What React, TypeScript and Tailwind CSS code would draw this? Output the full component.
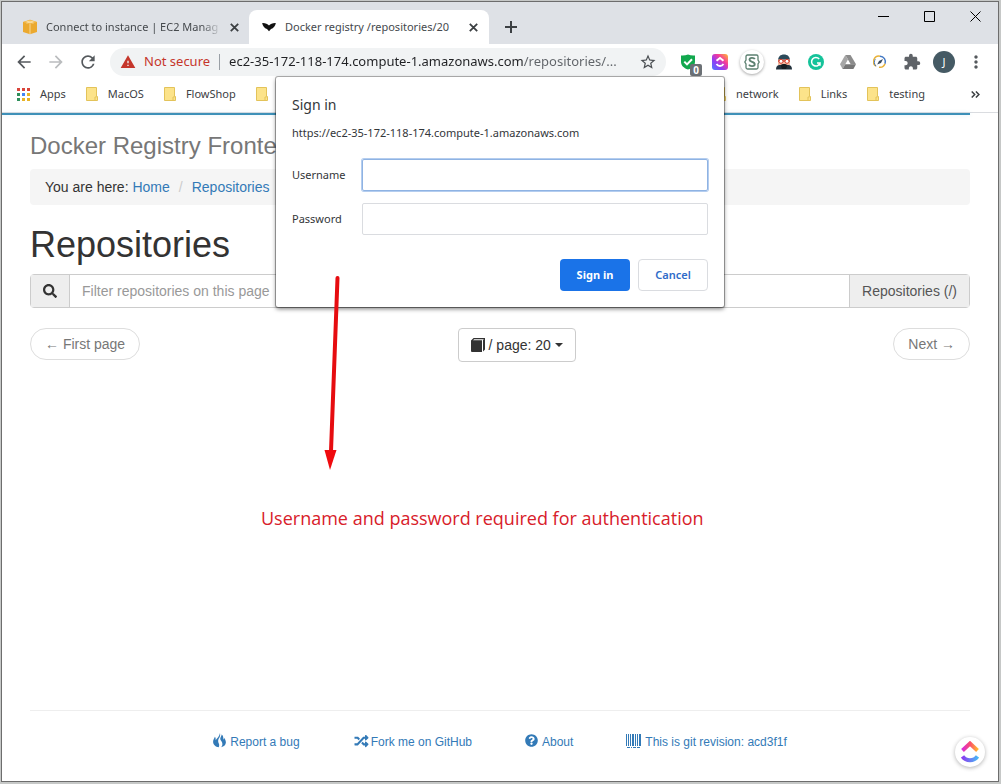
import type { ReactNode } from "react";
import {
  MdArrowBack,
  MdArrowForward,
  MdExtension,
  MdMoreVert,
  MdRefresh,
  MdStarBorder,
  MdWarning,
} from "react-icons/md";
import { FaQuestionCircle, FaRandom, FaSearch } from "react-icons/fa";

const appColors = [
  "bg-[#d9453b]",
  "bg-[#d9453b]",
  "bg-[#d9453b]",
  "bg-[#2f8f5b]",
  "bg-[#4285f4]",
  "bg-[#e8b325]",
  "bg-[#2f8f5b]",
  "bg-[#e8b325]",
  "bg-[#e8b325]",
];

const CloseIcon = () => (
  <svg className="size-[9px]" viewBox="0 0 9 9" fill="none" stroke="#3c4043" strokeWidth="1.8">
    <path d="M.8.8l7.4 7.4M8.2.8L.8 8.2" />
  </svg>
);

const BoxIcon = () => (
  <svg className="size-4 shrink-0" viewBox="0 0 16 16">
    <path d="M8 .8L15 3v10L8 15.200 1 13V3z" fill="#eba92f" />
    <path d="M1 3L8 .8 15 3 8 4.800z" fill="#f4c15c" />
    <path d="M8 4.800v10.400M4.500 2l7 2.200M11.500 2l-7 2.200" stroke="#fbe3b0" strokeWidth=".8" />
  </svg>
);

const TailIcon = () => (
  <svg className="h-[10px] w-[14px] shrink-0" viewBox="0 0 14 10">
    <path
      d="M.2 1C3 .8 5.600 1.700 7 3.500 8.400 1.700 11 .8 13.800 1c-.3 3-2.300 5.200-4.800 6L7 9.200 5 7C2.500 6.200.5 4 .2 1z"
      fill="#111"
    />
  </svg>
);

const FolderIcon = () => (
  <svg className="h-[14px] w-3 shrink-0" viewBox="0 0 12 14">
    <path d="M.5.5h10v9h1v4H.5z" fill="#fce38a" stroke="#e3c35a" />
    <path d="M9 13.500v-3.500h1.500" fill="none" stroke="#e3c35a" />
  </svg>
);

const ShieldIcon = () => (
  <svg className="size-4" viewBox="0 0 16 16">
    <path d="M8 .5c2 .9 4.300 1.200 7 1v6c0 4-2.500 6.500-7 8-4.500-1.500-7-4-7-8v-6c2.700.2 5-.1 7-1z" fill="#12a84e" />
    <path d="M4.300 7.600l2.700 2.800 5-5.200" fill="none" stroke="#fff" strokeWidth="2" />
  </svg>
);

const ClickUpTile = () => (
  <svg className="size-4" viewBox="0 0 16 16">
    <defs>
      <linearGradient id="tile" x1="0" y1="1" x2="1" y2="0">
        <stop offset="0" stopColor="#4a7bff" />
        <stop offset=".35" stopColor="#8f3df5" />
        <stop offset=".65" stopColor="#f5399b" />
        <stop offset="1" stopColor="#ffc02e" />
      </linearGradient>
    </defs>
    <rect width="16" height="16" rx="3" fill="url(#tile)" />
    <path d="M4.500 6.800L8 3.900l3.500 2.900M4.500 10c1.800 2.600 5.200 2.600 7 0" fill="none" stroke="#fff" strokeWidth="1.900" />
  </svg>
);

const ScriptIcon = () => (
  <span className="flex size-6 items-center justify-center rounded-full bg-white shadow-[0_1px_3px_rgba(0,0,0,0.35)]">
    <svg className="size-4" viewBox="0 0 16 16" fill="none" stroke="#5c8070">
      <path d="M5 1H3.500Q2 1 2 2.500V6L.8 8 2 10v3.500Q2 15 3.500 15H5M5 1h6M11 1h1.500Q14 1 14 2.500V6l1.200 2-1.200 2v3.500q0 1.500-1.500 1.500H5" strokeWidth="1.300" />
      <path d="M10.800 5.200C10 3.500 5.500 3.300 5.500 5.800c0 2.600 5.200 1.700 5.200 4.400 0 2.500-4.800 2.400-5.700.4" strokeWidth="1.900" />
    </svg>
  </span>
);

const NinjaIcon = () => (
  <svg className="size-4" viewBox="0 0 16 16">
    <path d="M2 7c0-4.500 2.500-6.500 6-6.500S14 2.500 14 7v3H2z" fill="#2c4a5a" />
    <path d="M2 5.500h12v5.500H2z" fill="#f2b9a2" />
    <path d="M0 15.500c0-2.500 1-4 3-4.500h10c2 .5 3 2 3 4.500z" fill="#22313c" />
    <path d="M2 7h12" stroke="#c93a2d" strokeWidth="1.200" />
    <circle cx="5" cy="7.300" r="2" fill="#fff" stroke="#d8402f" />
    <circle cx="11" cy="7.300" r="2" fill="#fff" stroke="#d8402f" />
    <path d="M4.500 11c1.500-1.500 5.500-1.500 7 0l-1.500 4H6z" fill="#151b20" />
  </svg>
);

const GrammarIcon = () => (
  <svg className="size-4" viewBox="0 0 16 16">
    <circle cx="8" cy="8" r="8" fill="#15c39a" />
    <path d="M11.200 5A4.300 4.300 0 1 0 12 9H9M12 9v2.800" fill="none" stroke="#fff" strokeWidth="1.500" />
  </svg>
);

const DriveIcon = () => (
  <svg className="h-[14px] w-4" viewBox="0 0 16 14">
    <path d="M5.300 0h5.200L16 9.300H10.700z" fill="#8c8c8c" />
    <path d="M5.300 0l2.700 4.600L2.600 14 0 9.300z" fill="#a6a6a6" />
    <path d="M5.300 9.300H16L13.400 14H2.600z" fill="#767676" />
  </svg>
);

const CompassIcon = () => (
  <svg className="size-[14px]" viewBox="0 0 14 14" fill="none">
    <path d="M3 11.200A5.500 5.500 0 0 1 7 1.200" stroke="#e8b23a" strokeWidth="1.500" />
    <path d="M7 1.200a5.500 5.500 0 0 1 5 7.500" stroke="#4479c4" strokeWidth="1.500" />
    <path d="M12 8.700A5.500 5.500 0 0 1 6 12.200" stroke="#e8b23a" strokeWidth="1.500" />
    <path d="M3 11.200C.8 9 1 6 2.300 4.200" stroke="#4479c4" strokeWidth="1" />
    <path d="M10 4L8 8 4.200 9.500 6 6z" fill="#3b4a5c" />
  </svg>
);

const FireIcon = () => (
  <svg className="h-[15px] w-[13px]" viewBox="0 0 13 15" fill="currentColor">
    <path d="M7 0c.6 2.600-.3 4-1.200 5.600-.9 1.700-.8 3.400 0 4.800.5 1 .6 2.300-.1 3.800C2.700 13.800.2 12 .1 9 0 7 1.300 5.600 1.900 3.800c.8 1 .9 2.100.7 3.400C4 5.400 6.500 3.300 7 0z" />
    <path d="M8.600 1.500c2 1.200 1.600 3.500 1.900 5.200.4-.6.6-1.200.6-2 1.300 1.800 2 3.500 1.700 5.400-.3 2.200-2 3.700-4.600 4.100 1.300-1.500 1.500-3.300.8-5-.7-1.500-1.900-2.300-1.700-3.900.2-1.300 1.200-2 1.300-3.800z" />
  </svg>
);

const BarcodeIcon = () => (
  <svg className="h-[14px] w-[15px]" viewBox="0 0 15 14" fill="currentColor">
    <path d="M0 0h1v12H0zM2 0h1v12H2zM4 0h1v12H4zM6 0h2v12H6zM9 0h1v12H9zM11 0h1v12h-1zM13 0h2v12h-2z" />
    <path d="M1 13h3v1H1zM5 13h1v1H5zM7 13h3v1H7zM11 13h3v1h-3z" />
  </svg>
);

const BookIcon = () => (
  <svg className="size-[14px]" viewBox="0 0 14 14">
    <path d="M2.600 0H14v11.500l-2 2V2.200L12.800 1.200H3.200L2 2.200h9v11.800H1q-1 0-1-1V2.500z" fill="#333" />
  </svg>
);

const ClickUpLogo = () => (
  <svg className="h-[22px] w-[18px]" viewBox="0 0 18 22" fill="none">
    <defs>
      <linearGradient id="roof" x1="0" x2="1">
        <stop offset="0" stopColor="#d92bd9" />
        <stop offset=".5" stopColor="#fb4d6d" />
        <stop offset="1" stopColor="#ffb62e" />
      </linearGradient>
      <linearGradient id="bowl" x1="0" x2="1">
        <stop offset="0" stopColor="#8a3df0" />
        <stop offset="1" stopColor="#49b6f5" />
      </linearGradient>
    </defs>
    <path d="M1.500 9.500L9 2.500l7.500 7" stroke="url(#roof)" strokeWidth="4" />
    <path d="M1.500 15.500c3.500 5 11.500 5 15 0" stroke="url(#bowl)" strokeWidth="4" />
  </svg>
);

const extensions = [
  { name: "Safe browsing", icon: <ShieldIcon />, badge: "0" },
  { name: "ClickUp", icon: <ClickUpTile /> },
  { name: "Scripts", icon: <ScriptIcon /> },
  { name: "Ninja", icon: <NinjaIcon /> },
  { name: "Grammar", icon: <GrammarIcon /> },
  { name: "Drive", icon: <DriveIcon /> },
  { name: "Compass", icon: <CompassIcon /> },
  { name: "Extensions", icon: <MdExtension className="size-[18px] text-[#5f6368]" /> },
];

const footerLinks = [
  { label: "Report a bug", icon: <FireIcon />, gap: "gap-1" },
  { label: "Fork me on GitHub", icon: <FaRandom className="h-[14px] w-[17px]" />, gap: "gap-px" },
  { label: "About", icon: <FaQuestionCircle className="size-[13px]" />, gap: "gap-1" },
  { label: "This is git revision: acd3f1f", icon: <BarcodeIcon />, gap: "gap-1" },
];

const ToolButton = ({ label, children }: { label: string; children: ReactNode }) => (
  <button aria-label={label} className="relative flex h-8 w-8 shrink-0 items-center justify-center">
    {children}
  </button>
);

const Bookmark = ({ label }: { label: string }) => (
  <a href="#" className="flex items-center gap-[10px]">
    <FolderIcon />
    {label}
  </a>
);

const TitleBar = () => (
  <div className="flex h-[42px] justify-between bg-[#dee1e6]">
    <div className="flex items-end text-[11px] text-[#45494d]">
      <div className="flex h-[34px] w-[247px] items-center gap-2 pr-[10px] pl-5">
        <BoxIcon />
        <span className="flex-1 whitespace-nowrap [mask-image:linear-gradient(to_right,#000_88%,transparent)]">
          Connect to instance | EC2 Manag
        </span>
        <button aria-label="Close tab">
          <CloseIcon />
        </button>
      </div>
      <div className="flex h-[34px] w-[240px] items-center gap-[9px] rounded-t-lg bg-white pr-[11px] pl-[13px]">
        <TailIcon />
        <span className="flex-1 whitespace-nowrap">Docker registry /repositories/20</span>
        <button aria-label="Close tab">
          <CloseIcon />
        </button>
      </div>
      <button aria-label="New tab" className="ml-4 flex h-[34px] items-center">
        <svg className="size-3" viewBox="0 0 12 12" stroke="#3c4043" strokeWidth="2">
          <path d="M6 0v12M0 6h12" />
        </svg>
      </button>
    </div>
    <div className="flex h-7 items-center">
      <button aria-label="Minimize" className="flex w-[46px] justify-center">
        <svg className="size-[11px]" viewBox="0 0 11 11" stroke="#000">
          <path d="M0 5.500h11" />
        </svg>
      </button>
      <button aria-label="Maximize" className="flex w-[46px] justify-center">
        <svg className="size-[11px]" viewBox="0 0 11 11" stroke="#000" fill="none">
          <path d="M.5.5h10v10H.5z" />
        </svg>
      </button>
      <button aria-label="Close" className="flex w-[46px] justify-center">
        <svg className="size-[11px]" viewBox="0 0 11 11" stroke="#000">
          <path d="M.5.5l10 10M10.500.5l-10 10" />
        </svg>
      </button>
    </div>
  </div>
);

const Toolbar = () => (
  <div className="flex h-9 items-center gap-[6px] px-[6px]">
    <div className="flex">
      <ToolButton label="Back">
        <MdArrowBack className="size-5 text-[#55595d]" />
      </ToolButton>
      <ToolButton label="Forward">
        <MdArrowForward className="size-5 text-[#babcbe]" />
      </ToolButton>
      <ToolButton label="Reload">
        <MdRefresh className="size-5 text-[#55595d]" />
      </ToolButton>
    </div>
    <div className="flex h-7 flex-1 items-center rounded-full bg-[#f1f3f4] pr-[9px] pl-[10px] text-[13px]">
      <MdWarning className="size-4 shrink-0 text-[#c5362b]" />
      <span className="ml-2 shrink-0 text-[#c5362b]">Not secure</span>
      <span className="ml-[9px] mr-[9px] h-4 w-px shrink-0 bg-[#9aa0a6]" />
      <input
        aria-label="Address"
        readOnly
        value="ec2-35-172-118-174.compute-1.amazonaws.com/repositories/..."
        className="min-w-0 flex-1 bg-[linear-gradient(to_right,#202124_295px,#5f6368_295px)] bg-clip-text text-transparent outline-none"
      />
      <button aria-label="Bookmark this page" className="ml-2 shrink-0">
        <MdStarBorder className="size-[18px] text-[#4a4e52]" />
      </button>
    </div>
    <div className="flex">
      {extensions.map((ext) => (
        <ToolButton key={ext.name} label={ext.name}>
          {ext.icon}
          {ext.badge && (
            <span className="absolute right-[2px] bottom-[2px] flex h-3 w-3 items-center justify-center rounded-xs bg-[#6b7075] text-[10px] font-bold text-white">
              {ext.badge}
            </span>
          )}
        </ToolButton>
      ))}
      <ToolButton label="Profile">
        <span className="flex size-[22px] items-center justify-center rounded-full bg-[#455a64] text-[11px] text-white">
          J
        </span>
      </ToolButton>
      <ToolButton label="Menu">
        <MdMoreVert className="size-5 text-[#55595d]" />
      </ToolButton>
    </div>
  </div>
);

const BookmarksBar = () => (
  <nav className="flex h-[33px] items-start justify-between border-b border-[#dadce0] pt-[5px] pr-[18px] pl-[15px] text-[11px] leading-[18px] text-[#3c4043]">
    <div className="flex gap-5">
      <a href="#" className="flex items-center gap-[10px]">
        <span className="grid grid-cols-3 gap-[2px]">
          {appColors.map((color, index) => (
            <span key={index} className={`size-[3px] ${color}`} />
          ))}
        </span>
        Apps
      </a>
      <Bookmark label="MacOS" />
      <Bookmark label="FlowShop" />
      <Bookmark label="" />
    </div>
    <div className="flex gap-5">
      <Bookmark label="network" />
      <Bookmark label="Links" />
      <Bookmark label="testing" />
      <button aria-label="More bookmarks" className="ml-[26px]">
        <svg className="h-[7px] w-[9px]" viewBox="0 0 9 7" fill="none" stroke="#3c4043" strokeWidth="1.500">
          <path d="M.7.5l3 3-3 3M4.900.5l3 3-3 3" />
        </svg>
      </button>
    </div>
  </nav>
);

const SignInDialog = () => (
  <form
    onSubmit={(e) => e.preventDefault()}
    className="absolute top-[75px] left-1/2 w-[448px] -translate-x-1/2 rounded-xs bg-white p-4 text-[11px] text-[#333639] shadow-[0_0_0_1px_rgba(0,0,0,0.3),0_2px_4px_rgba(0,0,0,0.5)]"
  >
    <h2 className="text-[14px] leading-6">Sign in</h2>
    <p className="mt-[7px] leading-[18px]">https://ec2-35-172-118-174.compute-1.amazonaws.com</p>
    <div className="mt-[17px] grid grid-cols-[70px_1fr] items-center gap-y-3">
      <label htmlFor="username">Username</label>
      <input id="username" className="h-8 rounded-xs border border-[#8fb3e3] px-2 shadow-[0_0_0_1px_#b4cdef] outline-none" />
      <label htmlFor="password">Password</label>
      <input id="password" type="password" className="h-8 rounded-xs border border-[#dadce0] px-2 outline-none" />
    </div>
    <div className="mt-6 flex justify-end gap-2">
      <button type="submit" className="h-8 w-[70px] rounded-sm bg-[#1a73e8] font-bold text-white">
        Sign in
      </button>
      <button type="button" className="h-8 w-[70px] rounded-sm border border-[#dadce0] font-semibold text-[#2f6bc9]">
        Cancel
      </button>
    </div>
  </form>
);

const RepositoriesPage = () => (
  <main className="flex flex-1 flex-col px-7 font-['Liberation_Sans',Arial,sans-serif] text-[14px] leading-5 text-[#333]">
    <div className="-mx-7 mr-0 h-[2px] bg-[#3d90b8] shadow-[0_0_4px_rgba(41,160,220,0.15)]" />
    <h3 className="mt-[18px] text-[24px] leading-[26px] text-[#777]">Docker Registry Frontend</h3>
    <nav className="mt-[10px] flex h-9 items-center rounded-sm bg-[#f5f5f5] px-[15px]">
      <span>You are here:&nbsp;</span>
      <a href="#" className="text-[#337ab7]">
        Home
      </a>
      <span className="px-[9px] text-[#ccc]">/</span>
      <a href="#" className="text-[#337ab7]">
        Repositories
      </a>
    </nav>
    <h1 className="mt-5 text-[36px] leading-[39px]">Repositories</h1>
    <div className="mt-[10px] flex h-[34px] rounded-sm border border-[#ccc]">
      <label htmlFor="filter" className="flex w-[39px] items-center justify-center border-r border-[#ccc] bg-[#eee]">
        <FaSearch className="size-[14px]" />
      </label>
      <input
        id="filter"
        placeholder="Filter repositories on this page"
        className="min-w-0 flex-1 px-3 outline-none placeholder:text-[#999]"
      />
      <span className="flex items-center border-l border-[#ccc] bg-[#eee] px-3 text-[#555]">Repositories (/)</span>
    </div>
    <div className="mt-5 flex items-start justify-between text-[#777]">
      <button className="h-8 rounded-full border border-[#ddd] px-[14px]">← First page</button>
      <button className="flex h-[34px] items-center gap-1 rounded-sm border border-[#ccc] px-3 text-[#333]">
        <BookIcon />
        / page: 20
        <span className="border-x-4 border-t-4 border-x-transparent border-t-[#333]" />
      </button>
      <button className="h-8 rounded-full border border-[#ddd] px-[14px]">Next →</button>
    </div>
    <footer className="mt-auto flex h-[71px] justify-center gap-[53px] border-t border-[#eee] pt-[21px] text-[12px] text-[#337ab7]">
      {footerLinks.map((link) => (
        <a key={link.label} href="#" className={`flex h-5 items-center ${link.gap}`}>
          <span className="pb-[3px]">{link.icon}</span>
          {link.label}
        </a>
      ))}
    </footer>
  </main>
);

const App = () => {
  return (
    <div className="flex min-h-screen bg-[#c6c8c7] pt-px pr-[2px] pb-[2px] pl-px font-['Noto_Sans',sans-serif]">
      <div className="relative flex flex-1 flex-col border border-[#6d6d6d] bg-white">
        <TitleBar />
        <Toolbar />
        <BookmarksBar />
        <RepositoriesPage />
        <SignInDialog />
        <svg className="absolute top-[271px] left-[320px] h-[198px] w-6" viewBox="0 0 24 198">
          <path d="M15.500 5L9 178" stroke="#e60c10" strokeWidth="4" strokeLinecap="round" />
          <path d="M2.500 177h12l-6.500 20z" fill="#f00a0e" />
        </svg>
        <p className="absolute top-[504px] left-[259px] font-['Open_Sans',sans-serif] text-[18px] leading-6 whitespace-nowrap text-[#d8202a]">
          Username and password required for authentication
        </p>
        <button
          aria-label="ClickUp"
          className="absolute right-[13px] bottom-[14px] flex size-[30px] items-center justify-center rounded-full bg-white shadow-[0_1px_4px_rgba(0,0,0,0.3)]"
        >
          <ClickUpLogo />
        </button>
      </div>
    </div>
  );
};

export default App;
